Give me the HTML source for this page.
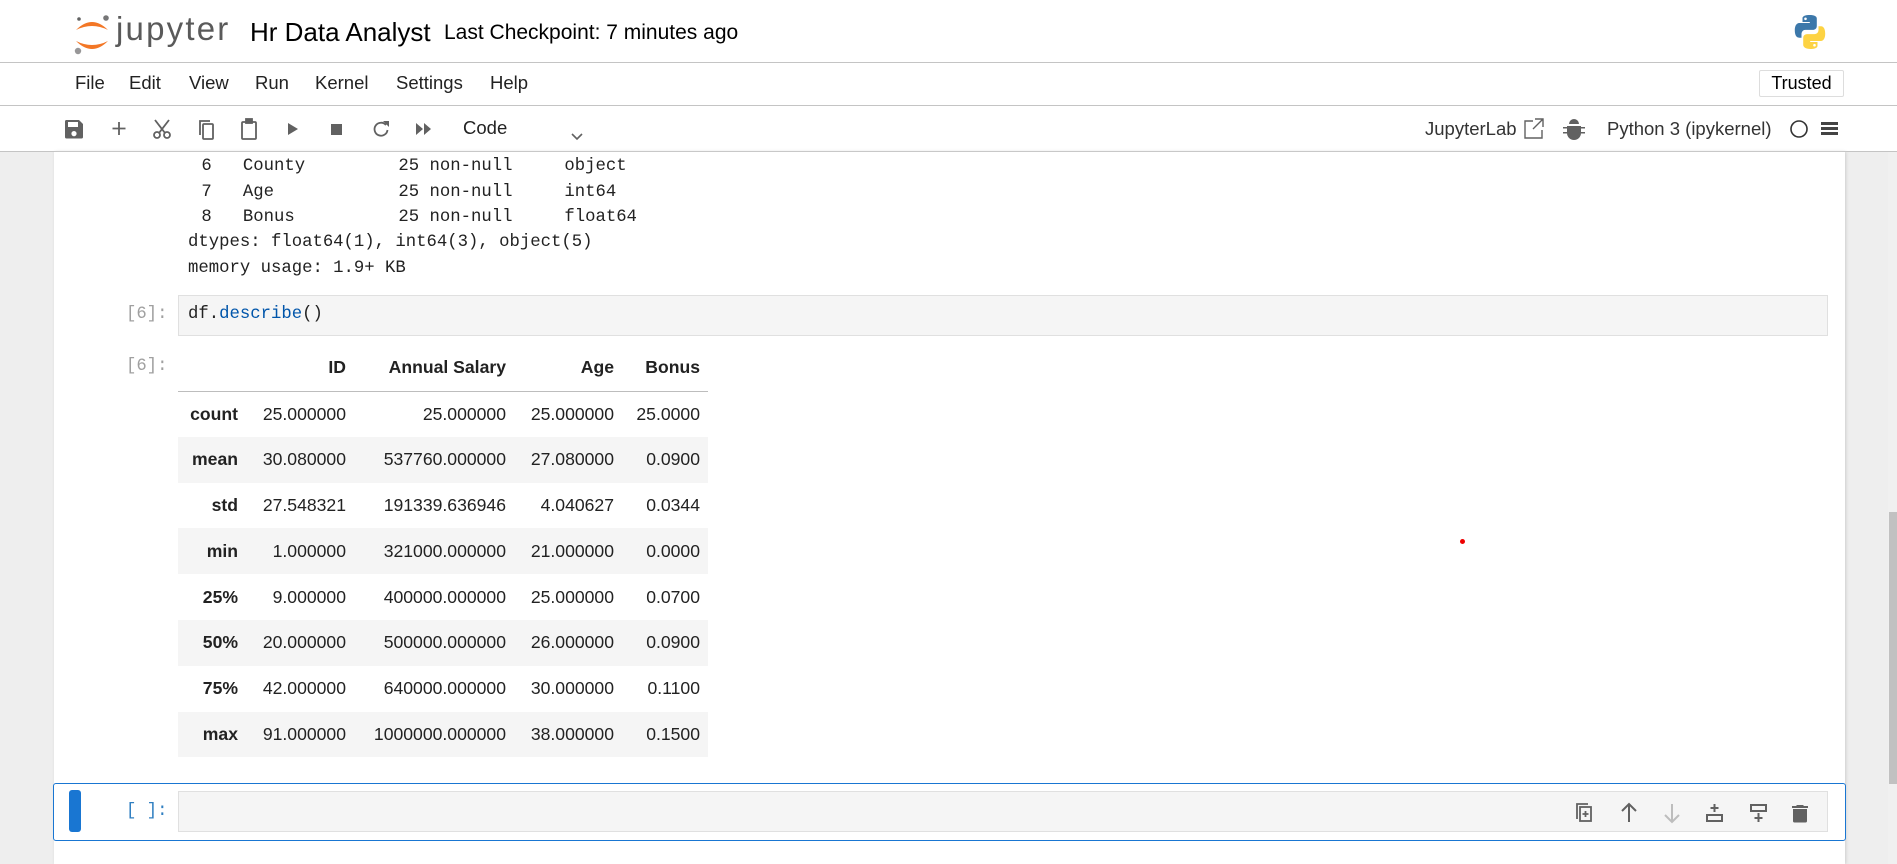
<!DOCTYPE html>
<html><head><meta charset="utf-8"><style>
*{margin:0;padding:0;box-sizing:border-box}
body{width:1897px;height:864px;overflow:hidden;background:#eeeeee;font-family:"Liberation Sans",sans-serif;position:relative;color:#000}
.abs{position:absolute}
#top{left:0;top:0;width:1897px;height:152px;background:#fff}
.hl{left:0;width:1897px;height:1px;background:#c4c4c4}
.menu{top:72px;font-size:18.5px;color:#222}
.mono{font-family:"Liberation Mono",monospace;font-size:17.3px;color:#222;white-space:pre}
#panel{left:54px;top:152px;width:1791px;height:712px;background:#fff;box-shadow:1px 0 3px #ccc}
table{position:absolute;left:178px;top:345px;border-collapse:collapse;font-size:17.6px;color:#222}
td,th{text-align:right;padding:0 8px;height:45.8px;white-space:nowrap}
thead th{height:46px;border-bottom:1.5px solid #bdbdbd}
tbody tr:nth-child(even){background:#f5f5f5}
th{font-weight:bold}
.ic{fill:#616161}
</style></head><body>
<div id="top" class="abs"></div>
<!-- logo -->
<svg class="abs" style="left:72px;top:12px" width="40" height="44" viewBox="0 0 40 44">
<path d="M4 18 Q20 2 36 18 Q20 10 4 18Z" fill="#f37726"/>
<path d="M4 29 Q20 45 36 29 Q20 37 4 29Z" fill="#f37726"/>
<circle cx="34" cy="6" r="2.8" fill="#767677"/><circle cx="6" cy="39" r="3.2" fill="#989798"/><circle cx="7" cy="7" r="1.8" fill="#616262"/>
</svg>
<div class="abs" style="left:116px;top:10px;font-size:33px;color:#5a5a5a;letter-spacing:2.2px">jupyter</div>
<div class="abs" style="left:250px;top:17px;font-size:26px">Hr Data Analyst</div>
<div class="abs" style="left:444px;top:21px;font-size:21px">Last Checkpoint: 7 minutes ago</div>
<svg class="abs" style="left:1792px;top:14px" width="36" height="36" viewBox="0 0 36 36">
<path d="M17.6 1C10 1 10.5 4.3 10.5 4.3V8h7.3v1H7.6S2.8 8.5 2.8 16.3s4.2 7.4 4.2 7.4h2.5v-3.6s-.1-4.2 4.1-4.2h7.2s4 .1 4-3.9V4.6S25.4 1 17.6 1z" fill="#3c78aa"/>
<path d="M18.4 35c7.6 0 7.1-3.300 7.1-3.3V28h-7.3v-1h10.2s4.8.5 4.8-7.3-4.2-7.4-4.2-7.4h-2.5v3.6s.1 4.2-4.1 4.2h-7.2s-4-.1-4 3.9v6.4S10.6 35 18.4 35z" fill="#fdd343"/>
<circle cx="13.5" cy="4.8" r="1.3" fill="#fff"/><circle cx="22.5" cy="31.2" r="1.3" fill="#fff"/>
</svg>
<div class="abs hl" style="top:62px"></div>
<div class="abs menu" style="left:75px">File</div>
<div class="abs menu" style="left:129px">Edit</div>
<div class="abs menu" style="left:189px">View</div>
<div class="abs menu" style="left:255px">Run</div>
<div class="abs menu" style="left:315px">Kernel</div>
<div class="abs menu" style="left:396px">Settings</div>
<div class="abs menu" style="left:490px">Help</div>
<div class="abs" style="left:1759px;top:70px;width:85px;height:27px;border:1px solid #ddd;border-radius:2px;font-size:18px;text-align:center;line-height:25px">Trusted</div>
<div class="abs hl" style="top:105px"></div>
<!-- toolbar -->
<svg class="abs" style="left:0;top:115px" width="600" height="28" viewBox="0 0 600 28">
<path class="ic" d="M66 5h13l4 4v13a1.5 1.5 0 0 1-1.5 1.5h-15A1.5 1.5 0 0 1 65 22V6.5A1.5 1.5 0 0 1 66 5zm2 2v5h10V7zm6 9a2.6 2.6 0 1 0 0 5.2 2.6 2.6 0 0 0 0-5.2z"/>
<path d="M119 7v13M112.5 13.5h13" stroke="#616161" stroke-width="1.8"/>
<g stroke="#616161" stroke-width="1.8" fill="none"><circle cx="157" cy="20" r="3"/><circle cx="167" cy="20" r="3"/><path d="M159 18L169 5M165 18L155 5"/></g>
<g stroke="#616161" stroke-width="1.8" fill="none"><rect x="203" y="9" width="10" height="15" rx="1"/><path d="M200 20V6h10"/></g>
<g stroke="#616161" stroke-width="1.8" fill="none"><rect x="242" y="7" width="14" height="17" rx="1"/><rect x="246" y="4" width="6" height="4" fill="#616161"/></g>
<path class="ic" d="M288 8l10 6-10 6z"/>
<rect class="ic" x="331" y="9" width="11" height="11"/>
<path d="M386 10a6.5 6.5 0 1 0 1.5 5" stroke="#616161" stroke-width="1.8" fill="none"/><path class="ic" d="M383 6h6v6z"/>
<path class="ic" d="M416 8l7 6-7 6zM424 8l7 6-7 6z"/>
<path d="M572 19l5 5 5-5" stroke="#616161" stroke-width="1.6" fill="none"/>
</svg>
<div class="abs" style="left:463px;top:117px;font-size:18.5px;color:#222">Code</div>
<div class="abs" style="left:1425px;top:118px;font-size:18.5px;color:#333">JupyterLab</div>
<svg class="abs" style="left:1520px;top:116px" width="300" height="26" viewBox="0 0 300 26">
<g stroke="#616161" stroke-width="1.4" fill="none"><path d="M13 5H5v17h17v-8M15 3h8v8M23 3l-10 10"/></g>
<path class="ic" d="M49 8a5 5 0 0 1 10 0zM47 10h14v7a7 7 0 0 1-14 0zM43 11h4v1.5h-4zM61 11h4v1.5h-4zM43 16h4v1.5h-4zM61 16h4v1.5h-4z"/>
<circle cx="279" cy="13" r="8" stroke="#333" stroke-width="1.6" fill="none"/>
</svg>
<div class="abs" style="left:1607px;top:118px;font-size:18.5px;color:#333">Python 3 (ipykernel)</div>
<div class="abs" style="left:1821px;top:122px;width:17px;height:3px;background:#444;box-shadow:0 5px 0 #444,0 10px 0 #444"></div>
<div class="abs hl" style="top:151px"></div>

<div id="panel" class="abs"></div>
<div class="abs mono" style="left:191px;top:154px;line-height:25.5px"> 6   County         25 non-null     object 
 7   Age            25 non-null     int64  
 8   Bonus          25 non-null     float64</div>
<div class="abs mono" style="left:188px;top:230px;line-height:25.5px">dtypes: float64(1), int64(3), object(5)
memory usage: 1.9+ KB</div>
<div class="abs mono" style="left:126px;top:305px;color:#a0a0a0">[6]:</div>
<div class="abs" style="left:178px;top:295px;width:1650px;height:41px;background:#f5f5f5;border:1px solid #e0e0e0"></div>
<div class="abs mono" style="left:188px;top:305px">df.<span style="color:#0055aa">describe</span>()</div>
<div class="abs mono" style="left:126px;top:357px;color:#a0a0a0">[6]:</div>
<table>
<thead><tr><th style="width:68px"></th><th style="width:108px">ID</th><th style="width:160px">Annual Salary</th><th style="width:108px">Age</th><th style="width:86px">Bonus</th></tr></thead>
<tbody>
<tr><th>count</th><td>25.000000</td><td>25.000000</td><td>25.000000</td><td>25.0000</td></tr>
<tr><th>mean</th><td>30.080000</td><td>537760.000000</td><td>27.080000</td><td>0.0900</td></tr>
<tr><th>std</th><td>27.548321</td><td>191339.636946</td><td>4.040627</td><td>0.0344</td></tr>
<tr><th>min</th><td>1.000000</td><td>321000.000000</td><td>21.000000</td><td>0.0000</td></tr>
<tr><th>25%</th><td>9.000000</td><td>400000.000000</td><td>25.000000</td><td>0.0700</td></tr>
<tr><th>50%</th><td>20.000000</td><td>500000.000000</td><td>26.000000</td><td>0.0900</td></tr>
<tr><th>75%</th><td>42.000000</td><td>640000.000000</td><td>30.000000</td><td>0.1100</td></tr>
<tr><th>max</th><td>91.000000</td><td>1000000.000000</td><td>38.000000</td><td>0.1500</td></tr>
</tbody></table>
<div class="abs" style="left:1460px;top:539px;width:5px;height:5px;border-radius:50%;background:#e00"></div>

<div class="abs" style="left:53px;top:783px;width:1793px;height:58px;border:1.5px solid #1976d2;border-radius:3px"></div>
<div class="abs" style="left:69px;top:790px;width:12px;height:42px;background:#1976d2;border-radius:3px"></div>
<div class="abs mono" style="left:126px;top:802px;color:#307fc1">[ ]:</div>
<div class="abs" style="left:178px;top:791px;width:1650px;height:41px;background:#f5f5f5;border:1px solid #e0e0e0"></div>
<svg class="abs" style="left:1570px;top:800px" width="250" height="26" viewBox="0 0 250 26">
<g stroke="#616161" stroke-width="1.8" fill="none"><path d="M7 19V4h11"/><rect x="10" y="7" width="11" height="14"/><path d="M15.5 11v6M12.5 14h6"/></g>
<path d="M59 22V4M52 11l7-7 7 7" stroke="#616161" stroke-width="2" fill="none"/>
<path d="M102 4v18M95 15l7 7 7-7" stroke="#bdbdbd" stroke-width="2" fill="none"/>
<g stroke="#616161" stroke-width="2" fill="none"><rect x="137" y="15" width="15" height="6"/><path d="M144.5 4v8M140.5 8h8"/></g>
<g stroke="#616161" stroke-width="2" fill="none"><rect x="181" y="5" width="15" height="6"/><path d="M188.5 13v9M184.5 18h8"/></g>
<path class="ic" d="M227 5h6l1 1h4v2h-16V6h4zM223 9h14v12a1.5 1.5 0 0 1-1.5 1.5h-11A1.5 1.5 0 0 1 223 21z"/>
</svg>
<div class="abs" style="left:1888px;top:152px;width:9px;height:712px;background:#f0f0f0"></div>
<div class="abs" style="left:1889px;top:512px;width:8px;height:272px;background:#c1c1c1"></div>
</body></html>
